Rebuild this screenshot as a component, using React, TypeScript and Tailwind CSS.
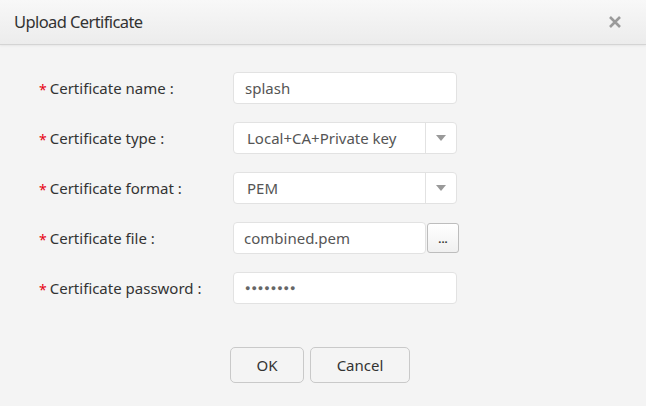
import React from "react";

const font = { fontFamily: '"Noto Sans", "Open Sans", Arial, sans-serif' };

function Label({ text }: { text: string }) {
  return (
    <div className="flex w-[194px] items-center text-[15px] text-[#333]">
      <span className="mr-[3px] mt-[4px] text-[14px] leading-none text-[#e60012]">*</span>
      {text}
    </div>
  );
}

function Arrow() {
  return (
    <div className="flex h-full w-[31px] items-center justify-center border-l border-[#e2e2e2]">
      <svg width="10" height="6" viewBox="0 0 10 6">
        <path d="M0 0h10L5 6z" fill="#999" />
      </svg>
    </div>
  );
}

export default function App() {
  return (
    <div className="flex h-[406px] w-[646px] flex-col bg-[#f4f4f4]" style={font}>
      <div className="flex h-[45px] items-center justify-between border-b border-[#d4d4d4] bg-gradient-to-b from-[#f8f8f8] to-[#ececec] pl-[14px] pr-[24px] shadow-[0_1px_2px_rgba(0,0,0,0.06)]">
        <h1 className="text-[16.5px] tracking-[-0.6px] text-[#333]">Upload Certificate</h1>
        <svg width="14" height="14" viewBox="0 0 14 14">
          <path d="M2 2l10 10M12 2L2 12" stroke="#9a9a9a" strokeWidth="2.6" />
        </svg>
      </div>

      <div className="flex flex-col gap-[18px] pl-[39px] pt-[27px]">
        <div className="flex h-[32px] items-center">
          <Label text="Certificate name :" />
          <div className="flex h-[32px] w-[224px] items-center rounded-[4px] border border-[#e2e2e2] bg-white px-[11px] text-[15px] text-[#555]">
            splash
          </div>
        </div>
        <div className="flex h-[32px] items-center">
          <Label text="Certificate type :" />
          <div className="flex h-[32px] w-[224px] items-center rounded-[4px] border border-[#e2e2e2] bg-white text-[15px] text-[#555]">
            <span className="flex-1 pl-[13px]">Local+CA+Private key</span>
            <Arrow />
          </div>
        </div>
        <div className="flex h-[32px] items-center">
          <Label text="Certificate format :" />
          <div className="flex h-[32px] w-[224px] items-center rounded-[4px] border border-[#e2e2e2] bg-white text-[15px] text-[#555]">
            <span className="flex-1 pl-[13px]">PEM</span>
            <Arrow />
          </div>
        </div>
        <div className="flex h-[32px] items-center">
          <Label text="Certificate file :" />
          <div className="flex h-[32px] w-[193px] items-center rounded-[4px] border border-[#e2e2e2] bg-white px-[10px] text-[15px] text-[#555]">
            combined.pem
          </div>
          <button className="ml-[1px] flex h-[30px] w-[32px] items-center justify-center rounded-[3px] border border-[#bdbdbd] bg-gradient-to-b from-white to-[#f0f0f0] text-[11px] font-bold leading-none text-[#333]">
            ...
          </button>
        </div>
        <div className="flex h-[32px] items-center">
          <Label text="Certificate password :" />
          <div className="flex h-[32px] w-[224px] items-center rounded-[4px] border border-[#e2e2e2] bg-white px-[11px] text-[9px] tracking-[1px] text-[#666]">
            ●●●●●●●●
          </div>
        </div>
      </div>

      <div className="mt-[43px] flex gap-[6px] pl-[230px]">
        <button className="h-[36px] w-[74px] rounded-[5px] border border-[#c9c9c9] bg-[#f4f4f4] text-[15px] text-[#333]">
          OK
        </button>
        <button className="h-[36px] w-[100px] rounded-[5px] border border-[#c9c9c9] bg-[#f4f4f4] text-[15px] text-[#333]">
          Cancel
        </button>
      </div>
    </div>
  );
}
